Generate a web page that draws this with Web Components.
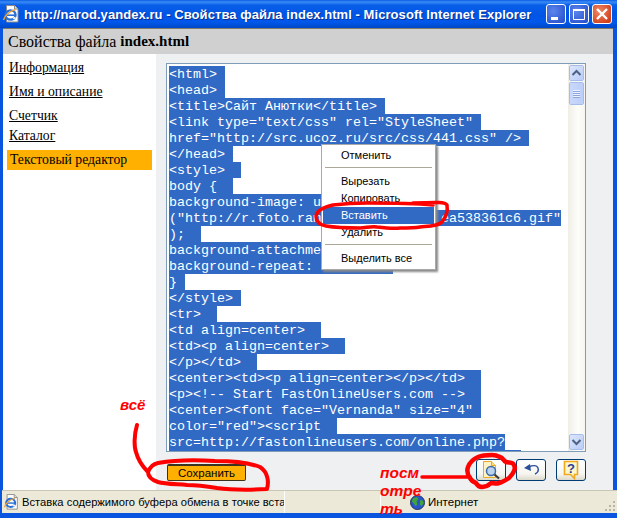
<!DOCTYPE html>
<html lang="ru">
<head>
<meta charset="utf-8">
<title>Свойства файла index.html</title>
<style>
  html, body { margin: 0; padding: 0; overflow: hidden; background: #0a55e0; }
</style>
</head>
<body>
<xp-window>
  <xp-titlebar slot="title">http://narod.yandex.ru - Свойства файла index.html - Microsoft Internet Explorer</xp-titlebar>
  <page-head slot="head">Свойства файла <b>index.html</b></page-head>
  <side-nav slot="nav">
    <nav-item gap="6">Информация</nav-item>
    <nav-item gap="8">Имя и описание</nav-item>
    <nav-item gap="8">Счетчик</nav-item>
    <nav-item gap="4">Каталог</nav-item>
    <nav-item gap="6" active>Текстовый редактор</nav-item>
  </side-nav>
  <code-editor slot="main"></code-editor>
  <tool-row slot="main">
    <save-button>Сохранить</save-button>
    <icon-button kind="preview"></icon-button>
    <icon-button kind="undo"></icon-button>
    <icon-button kind="help"></icon-button>
  </tool-row>
  <status-bar slot="status">Вставка содержимого буфера обмена в точке вставки</status-bar>
</xp-window>
<red-notes></red-notes>

<script>
const IE_ICON = `
  <svg width="18" height="18" viewBox="0 0 18 18">
    <path d="M3.500 .5h8l3.500 3.500v13h-11.500z" fill="#fff" stroke="#8a8a8a"/>
    <path d="M11.500 .5v3.500h3.500" fill="#dcdcdc" stroke="#8a8a8a"/>
    <ellipse cx="7.500" cy="10" rx="5" ry="4.600" fill="none" stroke="#2a6fd6" stroke-width="2.400"/>
    <path d="M3 10.200h9.500" stroke="#2a6fd6" stroke-width="1.600"/>
    <path d="M0.500 15c1-4 6-9 12-10.500" fill="none" stroke="#e9a13b" stroke-width="1.400"/>
    <path d="M10 13.500l2.500-1" stroke="#fff" stroke-width="1.500"/>
  </svg>`

customElements.define('xp-window', class extends HTMLElement {
  constructor() {
    super()
    this.attachShadow({ mode: 'open' }).innerHTML = `
      <style>
        :host {
          display: flex; flex-direction: column; width: 617px; height: 518px;
          box-sizing: border-box; background: #0a55e0;
        }
        .frame { flex: 1; display: flex; flex-direction: column; margin: 0 4px 0 3px; border-top: 1px solid #7d7a68; }
        .row { display: flex; height: 436px; }
        .nav { width: 153px; background: #fff; }
        .main { flex: 1; background: #eef0f2; padding: 9px 27px 0 10px; display: flex; flex-direction: column; }
        .status { margin-bottom: 5px; }
      </style>
      <slot name="title"></slot>
      <div class="frame">
        <slot name="head"></slot>
        <div class="row">
          <div class="nav"><slot name="nav"></slot></div>
          <div class="main"><slot name="main"></slot></div>
        </div>
      </div>
      <div class="status"><slot name="status"></slot></div>`
  }
})

customElements.define('xp-titlebar', class extends HTMLElement {
  constructor() {
    super()
    this.attachShadow({ mode: 'open' }).innerHTML = `
      <style>
        :host {
          display: flex; align-items: center; height: 28px; box-sizing: border-box; padding: 0 5px 0 3px;
          background: linear-gradient(#0a5ae6 0, #3a8cf5 2px, #0a5fe8 5px, #0055e5 14px, #0058ea 22px, #0048c8 28px);
          color: #fff; font: bold 13px "Liberation Sans", sans-serif; letter-spacing: .06px;
          text-shadow: 1px 1px 0 #0a2f90; white-space: nowrap;
        }
        .ico { width: 18px; height: 18px; margin-right: 3px; flex: none; }
        .txt { flex: 1; overflow: hidden; }
        .btns { display: flex; gap: 3px; flex: none; }
        .b {
          width: 18px; height: 18px; border: 1px solid #fff; border-radius: 3px;
          background: radial-gradient(circle at 35% 35%, #5b86ec, #2d55d0 80%);
        }
        .b.c { background: radial-gradient(circle at 35% 35%, #ef8a66, #d2401c 80%); }
        svg { display: block; }
      </style>
      <span class="ico">${IE_ICON}</span>
      <span class="txt"><slot></slot></span>
      <span class="btns">
        <span class="b"><svg width="18" height="18"><rect x="4" y="12" width="7" height="3" fill="#fff"/></svg></span>
        <span class="b"><svg width="18" height="18"><path d="M3.500 4.500h11v10h-11z" fill="none" stroke="#fff"/><path d="M3 4h12v2h-12z" fill="#fff"/></svg></span>
        <span class="b c"><svg width="18" height="18"><path d="M4 4l10 10M14 4l-10 10" stroke="#fff" stroke-width="2.400"/></svg></span>
      </span>`
  }
})

customElements.define('page-head', class extends HTMLElement {
  constructor() {
    super()
    this.attachShadow({ mode: 'open' }).innerHTML = `
      <style>
        :host {
          display: flex; align-items: center; height: 25px; box-sizing: border-box; padding-left: 5px;
          background: #d0d0d0; color: #000; font: 16px "Liberation Serif", serif;
          white-space: pre;
        }
        ::slotted(b) { font-size: 15px; }
      </style>
      <slot></slot>`
  }
})

customElements.define('side-nav', class extends HTMLElement {
  constructor() {
    super()
    this.attachShadow({ mode: 'open' }).innerHTML = `
      <style>
        :host { display: flex; flex-direction: column; padding: 0 4px; font: 13.7px/16px "Liberation Serif", serif; color: #000; }
      </style>
      <slot></slot>`
  }
})

customElements.define('nav-item', class extends HTMLElement {
  constructor() {
    super()
    const active = this.hasAttribute('active')
    const gap = this.getAttribute('gap') || 0
    this.attachShadow({ mode: 'open' }).innerHTML = `
      <style>
        :host { display: block; margin-top: ${gap}px; padding: ${active ? '2px 3px' : '0 2px'}; ${active ? 'background: #ffb000;' : ''} }
        span { ${active ? '' : 'text-decoration: underline;'} }
      </style>
      <span><slot></slot></span>`
  }
})

// the parts under the context menu are left blank, only the selection shows there
const CODE_LINES = [
  ['<html>', 1], ['<head>', 1], ['<title>Сайт Анютки</title>', 1],
  ['<link type="text/css" rel="StyleSheet"', 1],
  ['href="http://src.ucoz.ru/src/css/441.css" />', 1],
  ['</head>', 1], ['<style>', 2], ['body {', 2],
  ['background-image: u', 4],
  ['("http://r.foto.ram' + ' '.repeat(15) + 'ea538361c6.gif"', 0],
  [');', 2], ['background-attachme', 12], ['background-repeat: ', 9],
  ['}', 1], ['</style>', 1], ['<tr>', 2],
  ['<td align=center>', 2], ['<td><p align=center>', 2], ['</p></td>', 2],
  ['<center><td><p align=center></p></td>', 2],
  ['<p><!-- Start FastOnlineUsers.com -->', 2],
  ['<center><font face="Vernanda" size="4"', 1],
  ['color="red"><script', 2],
  ['src=http://fastonlineusers.com/online.php?', 0],
  ['&nbsp;', 43]
]

customElements.define('code-editor', class extends HTMLElement {
  constructor() {
    super()
    const lines = CODE_LINES.map(([t, pad]) =>
      `<span class="ln">${t.replace(/&(?!nbsp)/g, '&amp;').replace(/</g, '&lt;')}${' '.repeat(pad)}</span>`).join('')
    this.attachShadow({ mode: 'open' }).innerHTML = `
      <style>
        :host {
          display: flex; position: relative; height: 389px; box-sizing: border-box;
          border: 1px solid #7f9db9; background: #fff; overflow: hidden;
        }
        .code { flex: 1; padding: 2px 0 0 2px; overflow: hidden; font: 13.333px/18px "Liberation Mono", monospace; color: #fff; }
        .ln { display: block; width: fit-content; white-space: pre; background: #316ac5; height: 16px; }
      </style>
      <div class="code">${lines}</div>
      <xp-scrollbar></xp-scrollbar>
      <context-menu></context-menu>`
  }
})

customElements.define('xp-scrollbar', class extends HTMLElement {
  constructor() {
    super()
    this.attachShadow({ mode: 'open' }).innerHTML = `
      <style>
        :host {
          display: flex; flex-direction: column; width: 17px; flex: none; height: 100%;
          background: linear-gradient(90deg, #f0eee6, #fdfdfb 60%, #f6f5ef);
        }
        .b {
          margin: 1px 1px 0 1px; border: 1px solid #fff; height: 14px;
          background: linear-gradient(135deg, #dce6fc, #b9cdf8); border-radius: 2px; outline: 1px solid #a5bde8; outline-offset: -1px;
        }
        .b svg { display: block; margin: 0 auto; }
        .thumb {
          margin: 1px 1px 0; height: 23px; box-sizing: border-box; border: 1px solid #fff; outline: 1px solid #a5bde8; outline-offset: -1px;
          border-radius: 2px; background: linear-gradient(90deg, #c9d8fb, #bccffa);
          display: flex; align-items: center; justify-content: center;
        }
        .sp { flex: 1; }
      </style>
      <div class="b"><svg width="13" height="14"><path d="M2.500 9l4-4 4 4" fill="none" stroke="#4d6185" stroke-width="2"/></svg></div>
      <div class="thumb"><svg width="7" height="8"><path d="M0 .5h7M0 2.500h7M0 4.500h7M0 6.500h7" stroke="#eef3ff"/><path d="M0 1.500h7M0 3.500h7M0 5.500h7M0 7.500h7" stroke="#8aa5e0"/></svg></div>
      <div class="sp"></div>
      <div class="b" style="margin-bottom:1px"><svg width="13" height="14"><path d="M2.500 5l4 4 4-4" fill="none" stroke="#4d6185" stroke-width="2"/></svg></div>`
  }
})

customElements.define('context-menu', class extends HTMLElement {
  constructor() {
    super()
    this.attachShadow({ mode: 'open' }).innerHTML = `
      <style>
        :host {
          position: absolute; left: 154px; top: 80px; width: 115px; height: 126px; box-sizing: border-box;
          background: #fff; border: 1px solid #a8a8a8; padding: 2px 1px;
          box-shadow: 2px 2px 2px #8a8a8a; font: 11px/17px "Liberation Sans", sans-serif; color: #000;
        }
        .i { height: 17px; padding-left: 18px; white-space: nowrap; }
        .on { background: #316ac5; color: #fff; }
        .s { height: 1px; background: #aca899; margin: 3px 2px 5px; }
      </style>
      <div class="i">Отменить</div>
      <div class="s"></div>
      <div class="i">Вырезать</div>
      <div class="i">Копировать</div>
      <div class="i on">Вставить</div>
      <div class="i">Удалить</div>
      <div class="s"></div>
      <div class="i">Выделить все</div>`
  }
})

customElements.define('tool-row', class extends HTMLElement {
  constructor() {
    super()
    this.attachShadow({ mode: 'open' }).innerHTML = `
      <style>
        :host { display: flex; align-items: flex-end; gap: 10px; height: 22px; margin: 7px 0 0 1px; }
      </style>
      <slot></slot>`
  }
})

customElements.define('save-button', class extends HTMLElement {
  constructor() {
    super()
    this.attachShadow({ mode: 'open' }).innerHTML = `
      <style>
        :host {
          display: flex; align-items: center; justify-content: center; width: 79px; height: 17px; margin-right: auto;
          box-sizing: border-box; background: #ffb000; border: 1px solid #3a3320; border-top-width: 2px; border-radius: 2px;
          font: 11.500px "Liberation Sans", sans-serif; color: #000;
        }
      </style>
      <slot></slot>`
  }
})

const BUTTON_ICONS = {
  preview: `<svg width="22" height="20" viewBox="0 0 22 20">
      <path d="M3.500 1.500h8l4 4v12h-12z" fill="#fff2c4" stroke="#e8a92c"/>
      <path d="M11.500 1.500v4h4" fill="#ffe08a" stroke="#e8a92c"/>
      <circle cx="11" cy="11" r="4.500" fill="#bcd3ee" stroke="#3c6aa8" stroke-width="1.500"/>
      <path d="M14.500 14.500l4.500 4" stroke="#3a3a3a" stroke-width="2.200"/>
    </svg>`,
  undo: `<svg width="22" height="20" viewBox="0 0 22 20">
      <path d="M9 7c4-2 8-2 9 1s-1 5-3 6" fill="none" stroke="#2a4f9a" stroke-width="1.400"/>
      <path d="M4 8l6-4 1 7z" fill="#2a4f9a"/>
    </svg>`,
  help: `<svg width="22" height="20" viewBox="0 0 22 20">
      <path d="M4.500 1.500h13v13h-3v4l-4-4h-6z" fill="#fff6cc" stroke="#eea91e" stroke-width="1.600"/>
      <text x="11" y="12.500" text-anchor="middle" font-family="Liberation Sans" font-weight="bold" font-size="13" fill="#2a3f9a">?</text>
    </svg>`
}

customElements.define('icon-button', class extends HTMLElement {
  constructor() {
    super()
    this.attachShadow({ mode: 'open' }).innerHTML = `
      <style>
        :host {
          display: flex; align-items: center; justify-content: center; width: 30px; height: 22px; box-sizing: border-box;
          border: 1px solid #003c74; border-radius: 3px;
          background: linear-gradient(#fff, #f6f5f0 70%, #dcd8ca);
        }
        svg { display: block; }
      </style>
      ${BUTTON_ICONS[this.getAttribute('kind')]}`
  }
})

customElements.define('status-bar', class extends HTMLElement {
  constructor() {
    super()
    this.attachShadow({ mode: 'open' }).innerHTML = `
      <style>
        :host {
          display: flex; align-items: center; height: 23px; box-sizing: border-box; margin-left: 2px;
          background: #ece9d8; border-top: 1px solid #c9c6b6;
          font: 11.500px "Liberation Sans", sans-serif; color: #000; white-space: nowrap;
        }
        .ico { width: 16px; margin: 0 2px 0 2px; flex: none; }
        .ico svg { width: 16px; height: 16px; }
        .msg { width: 262px; overflow: hidden; flex: none; height: 15px; line-height: 15px; font-size: 11.200px; }
        .sep { width: 96px; height: 100%; box-sizing: border-box; border-left: 1px solid #fff; flex: none; }
        .zone { flex: 1; display: flex; align-items: center; gap: 3px; height: 100%; padding-left: 29px; border-left: 1px solid #fff; }
        .grip { width: 12px; height: 12px; margin: auto 1px 1px auto; }
        svg { display: block; }
      </style>
      <span class="ico">${IE_ICON}</span>
      <span class="msg"><slot></slot></span>
      <span class="sep"></span>
      <span class="zone">
        <svg width="15" height="15" viewBox="0 0 16 16">
          <circle cx="8" cy="8" r="7.500" fill="#2a55c8" stroke="#22305a"/>
          <path d="M3 3.500l4-1.500 2 2-2 3 1 3-2 2-2-3-2-2zM11 5l3 1 .5 3-2.500 3-1.500-2z" fill="#3fa53a"/>
        </svg>
        <span>Интернет</span>
        <svg class="grip" viewBox="0 0 12 12">
          <path d="M9 1h2v2h-2zM5 5h2v2h-2zM9 5h2v2h-2zM1 9h2v2h-2zM5 9h2v2h-2zM9 9h2v2h-2z" fill="#b8b5a4"/>
        </svg>
      </span>`
  }
})

customElements.define('red-notes', class extends HTMLElement {
  constructor() {
    super()
    this.attachShadow({ mode: 'open' }).innerHTML = `
      <style>
        :host { position: absolute; left: 0; top: 0; width: 617px; height: 518px; pointer-events: none; }
        svg { position: absolute; left: 0; top: 0; }
        path { fill: none; stroke: #f00; stroke-linecap: round; stroke-linejoin: round; }
        .t { position: absolute; color: #f00; font: italic bold 15.500px/18px "Liberation Sans", sans-serif; }
      </style>
      <svg width="617" height="518">
        <path stroke-width="4" d="M137 425C134 435 134 447 136 452C138 460 143 467 148 472C150 467 153 464 158 463C175 460 200 460 215 461C235 461 250 463 260 467C268 472 269 482 267 489C250 490 232 490 217 488C205 486 195 485 187 485C175 484 165 484 158 482C152 480 148 477 148 472"/>
        <path stroke-width="3.500" d="M433 205C411 203 389 203 367 203C354 203 341 204 333 205C324 207 317 210 316 216C316 222 320 225 326 226C338 228 350 228 360 228C366 228 371 226 377 227C385 228 393 229 400 228C408 228 414 228 420 227C430 226 438 226 442 222C446 217 448 211 447 205C445 202 439 202 413 203"/>
        <path stroke-width="3.500" d="M422 477h48"/>
        <path stroke-width="4.500" d="M470 478C467 474 467 470 468 467C470 462 473 459 478 457C483 455 488 455 492 455C495 455 498 456 500 457C503 458 504 461 506 462C509 463 513 462 514 465C515 467 515 469 514 471C513 474 511 476 509 478C506 480 503 482 499 483C496 484 494 483 491 483C489 485 486 487 482 487C479 487 477 485 476 483C473 482 471 480 470 478Z"/>
      </svg>
      <div class="t" style="left:120px;top:396px;font-size:15px">всё</div>
      <div class="t" style="left:380px;top:464px">посм<br>отре<br>ть</div>`
  }
})
</script>
</body>
</html>
